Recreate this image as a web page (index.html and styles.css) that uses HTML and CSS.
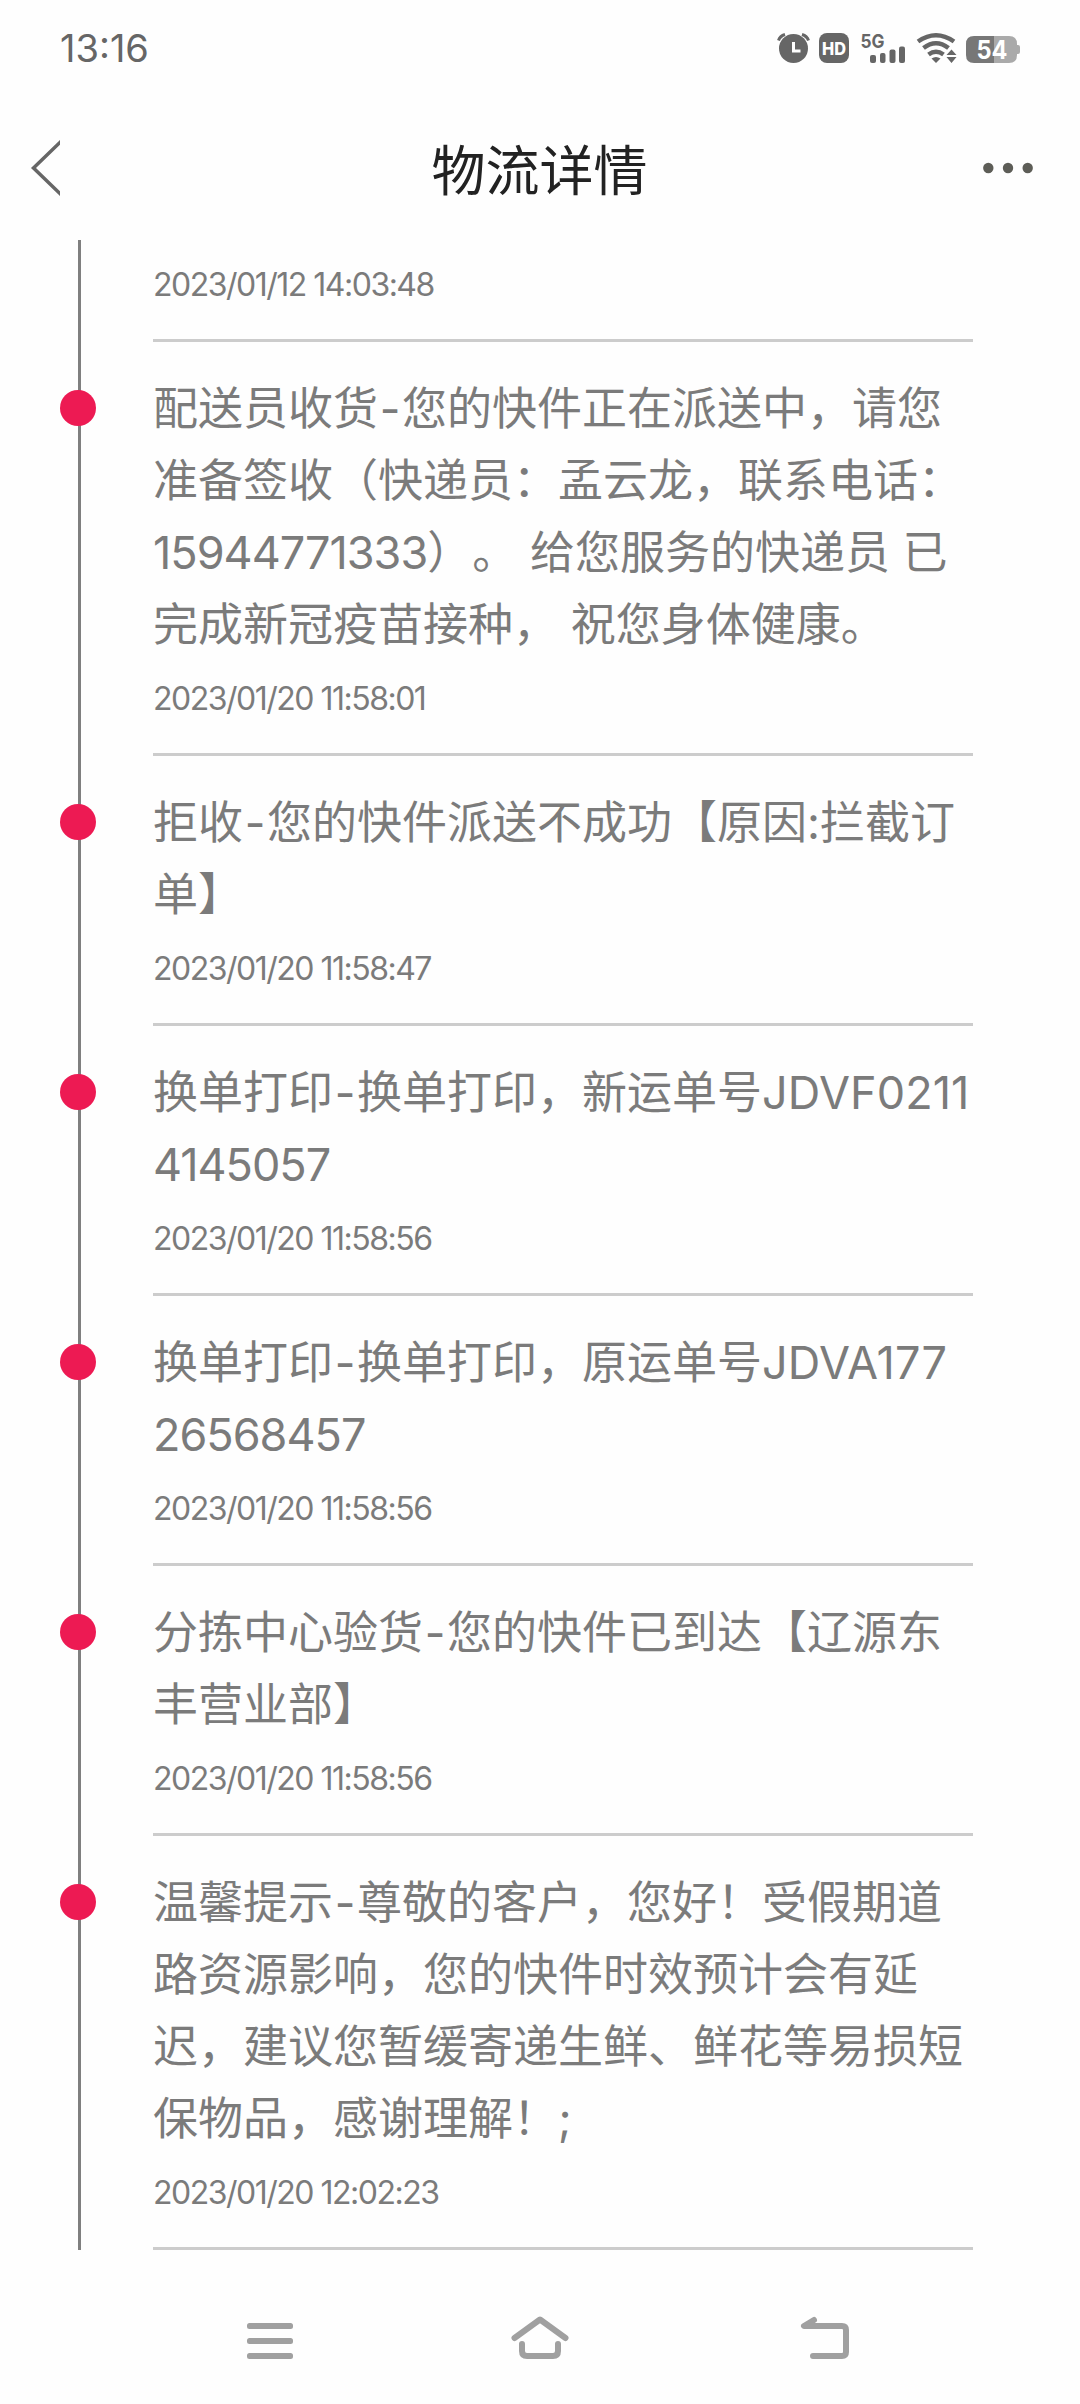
FILE: index.html
```html
<!DOCTYPE html>
<html lang="zh-CN">
<head>
    <meta charset="UTF-8">
    <meta name="viewport" content="width=device-width, initial-scale=1.0">
    <title>物流详情</title>
    <link rel="stylesheet" href="styles.css">
</head>
<body>
<div class="status">
    <span class="clock">13:16</span>
    <svg class="status-icons" width="246" height="36" viewBox="776 30 246 36" fill="#666">
        <!-- alarm -->
        <circle cx="793.5" cy="48.5" r="14.5"/>
        <path d="M778.5 40.5Q780 36 785 34.5M802 34.5Q807 36 808.5 40.5" fill="none" stroke="#666" stroke-width="3"/>
        <path d="M793.5 42V51H800.5" fill="none" stroke="#fff" stroke-width="3"/>
        <!-- HD -->
        <rect x="819" y="33" width="30" height="30" rx="8"/>
        <text class="hd" x="822" y="54.5" textLength="24" lengthAdjust="spacingAndGlyphs">HD</text>
        <!-- signal -->
        <text class="net" x="860.5" y="47.5" textLength="24" lengthAdjust="spacingAndGlyphs">5G</text>
        <rect x="870" y="55" width="6" height="8" rx="2"/>
        <rect x="880" y="53" width="5.5" height="10" rx="2"/>
        <rect x="889.5" y="49.5" width="6" height="13.5" rx="2"/>
        <rect x="899" y="46.5" width="6" height="16.5" rx="2"/>
        <!-- wifi -->
        <g fill="none" stroke="#666" stroke-width="4.5">
            <path d="M918 41.5Q936 29 954 41.5"/>
            <path d="M923.5 48Q936 38.5 948.5 48"/>
            <path d="M928.5 54.5Q936 49 943.5 54.5"/>
        </g>
        <path d="M931.5 58.5Q936 55.5 940.5 58.5L936 63Z"/>
        <path d="M946.5 55L951.5 49.5L956.5 55ZM946.5 57L951.5 63L956.5 57Z"/>
        <!-- battery -->
        <path d="M994 36H1009Q1017 36 1017 44V45H1018Q1020 45 1020 47V52Q1020 54 1018 54H1017V55Q1017 63 1009 63H994Z" fill="#aaa"/>
        <path d="M994 36H974Q966 36 966 44V55Q966 63 974 63H994Z" fill="#777"/>
        <text class="level" x="976.5" y="59" textLength="31" lengthAdjust="spacingAndGlyphs">54</text>
    </svg>
</div>

<div class="header">
    <svg class="back" width="30" height="56" viewBox="30 139 30 56">
        <path d="M62 139.5L33.5 167L62 194.5" fill="none" stroke="#666" stroke-width="3.5"/>
    </svg>
    <h1 class="title">物流详情</h1>
    <svg class="more" width="52" height="12" viewBox="982 162 52 12" fill="#5d5d57">
        <circle cx="988.3" cy="168" r="5.2"/>
        <circle cx="1008" cy="168" r="5.2"/>
        <circle cx="1027.7" cy="168" r="5.2"/>
    </svg>
</div>

<div class="timeline">
    <div class="item first">
        <p class="time">2023/01/12 14:03:48</p>
    </div>
    <div class="item">
        <span class="dot"></span>
        <p class="text">配送员收货<i class="dash">-</i>您的快件正在派送中，请您<br>准备签收（快递员：孟云龙，联系电话：<br><span class="num">15944771333</span>）。 给您服务的快递员 已<br>完成新冠疫苗接种， 祝您身体健康。</p>
        <p class="time">2023/01/20 11:58:01</p>
    </div>
    <div class="item">
        <span class="dot"></span>
        <p class="text">拒收<i class="dash">-</i>您的快件派送不成功【原因:拦截订<br>单】</p>
        <p class="time">2023/01/20 11:58:47</p>
    </div>
    <div class="item">
        <span class="dot"></span>
        <p class="text">换单打印<i class="dash">-</i>换单打印，新运单号<span class="num code">JDVF0211</span><br><span class="num">4145057</span></p>
        <p class="time">2023/01/20 11:58:56</p>
    </div>
    <div class="item">
        <span class="dot"></span>
        <p class="text">换单打印<i class="dash">-</i>换单打印，原运单号<span class="num code">JDVA177</span><br><span class="num">26568457</span></p>
        <p class="time">2023/01/20 11:58:56</p>
    </div>
    <div class="item">
        <span class="dot"></span>
        <p class="text">分拣中心验货<i class="dash">-</i>您的快件已到达【辽源东<br>丰营业部】</p>
        <p class="time">2023/01/20 11:58:56</p>
    </div>
    <div class="item">
        <span class="dot"></span>
        <p class="text">温馨提示<i class="dash">-</i>尊敬的客户，您好！受假期道<br>路资源影响，您的快件时效预计会有延<br>迟，建议您暂缓寄递生鲜、鲜花等易损短<br>保物品，感谢理解！;</p>
        <p class="time">2023/01/20 12:02:23</p>
    </div>
</div>

<div class="navbar">
    <svg width="60" height="60" viewBox="240 2311 60 60" fill="#a0a0a0">
        <rect x="247" y="2323" width="46" height="6" rx="2.5"/>
        <rect x="247" y="2338" width="46" height="6" rx="2.5"/>
        <rect x="247" y="2353" width="46" height="6" rx="2.5"/>
    </svg>
    <svg width="60" height="60" viewBox="510 2311 60 60" fill="none" stroke="#a0a0a0" stroke-width="6" stroke-linecap="round" stroke-linejoin="round">
        <path d="M514.5 2338L540 2319.5L565.5 2338"/>
        <path d="M522 2344V2351Q522 2356 527 2356H553Q558 2356 558 2351V2344"/>
    </svg>
    <svg width="60" height="60" viewBox="795 2311 60 60" fill="none" stroke="#a0a0a0" stroke-width="6" stroke-linecap="round" stroke-linejoin="round">
        <path d="M814 2320L804 2326H842Q846 2326 846 2330V2352Q846 2356 842 2356H813"/>
    </svg>
</div>
</body>
</html>
```

FILE: styles.css
```css
* {
    margin: 0;
    padding: 0;
    box-sizing: border-box;
}
body {
    width: 1080px;
    height: 2404px;
    background: #fefefe;
    font-family: Inter, "Noto Sans CJK SC", sans-serif;
    color: #7b7b7b;
    overflow: hidden;
}
svg {
    display: block;
}

/* status bar */
.status {
    display: flex;
    justify-content: space-between;
    align-items: center;
    height: 96px;
    padding: 0 58px 0 60px;
}
.clock {
    font-size: 38px;
    font-weight: 400;
    color: #666;
}
.hd {
    font: 800 17px Inter, sans-serif;
    fill: #fff;
}
.net {
    font: 700 19px Inter, sans-serif;
}
.level {
    font: 700 26px Inter, sans-serif;
    fill: #fff;
}

/* title bar */
.header {
    display: flex;
    justify-content: space-between;
    align-items: center;
    height: 144px;
    padding: 0 46px 0 30px;
}
.title {
    font-size: 54px;
    font-weight: 400;
    line-height: 72px;
    color: #222;
    padding: 8px 0 0 37px;
}

/* logistics timeline */
.timeline {
    position: relative;
    height: 2010px;
    padding: 0 107px 0 153px;
}
.timeline::before {
    content: "";
    position: absolute;
    left: 78px;
    top: 0;
    width: 3px;
    height: 100%;
    background: #7f7f7f;
}
.item {
    position: relative;
    padding: 31px 0 18px;
    border-bottom: 3px solid #ccc;
}
.first {
    padding-top: 7px;
}
.dot {
    position: absolute;
    left: -93px;
    top: 48px;
    width: 36px;
    height: 36px;
    border-radius: 50%;
    background: #ed1a53;
}
.text {
    font-size: 45px;
    line-height: 72px;
    margin-bottom: 2px;
    white-space: nowrap;
    text-spacing-trim: space-all;
}
.first .time {
    margin-top: 2px;
}
.num {
    letter-spacing: -1px;
}
.code {
    letter-spacing: 0.1px;
}
.dash {
    display: inline-block;
    width: 24px;
    font-style: normal;
    text-align: center;
}
.time {
    font-size: 32px;
    line-height: 72px;
    letter-spacing: -1.5px;
    white-space: nowrap;
}

/* system navigation */
.navbar {
    display: grid;
    grid-template-columns: 270px 285px 60px;
    padding: 61px 0 0 240px;
}
```
